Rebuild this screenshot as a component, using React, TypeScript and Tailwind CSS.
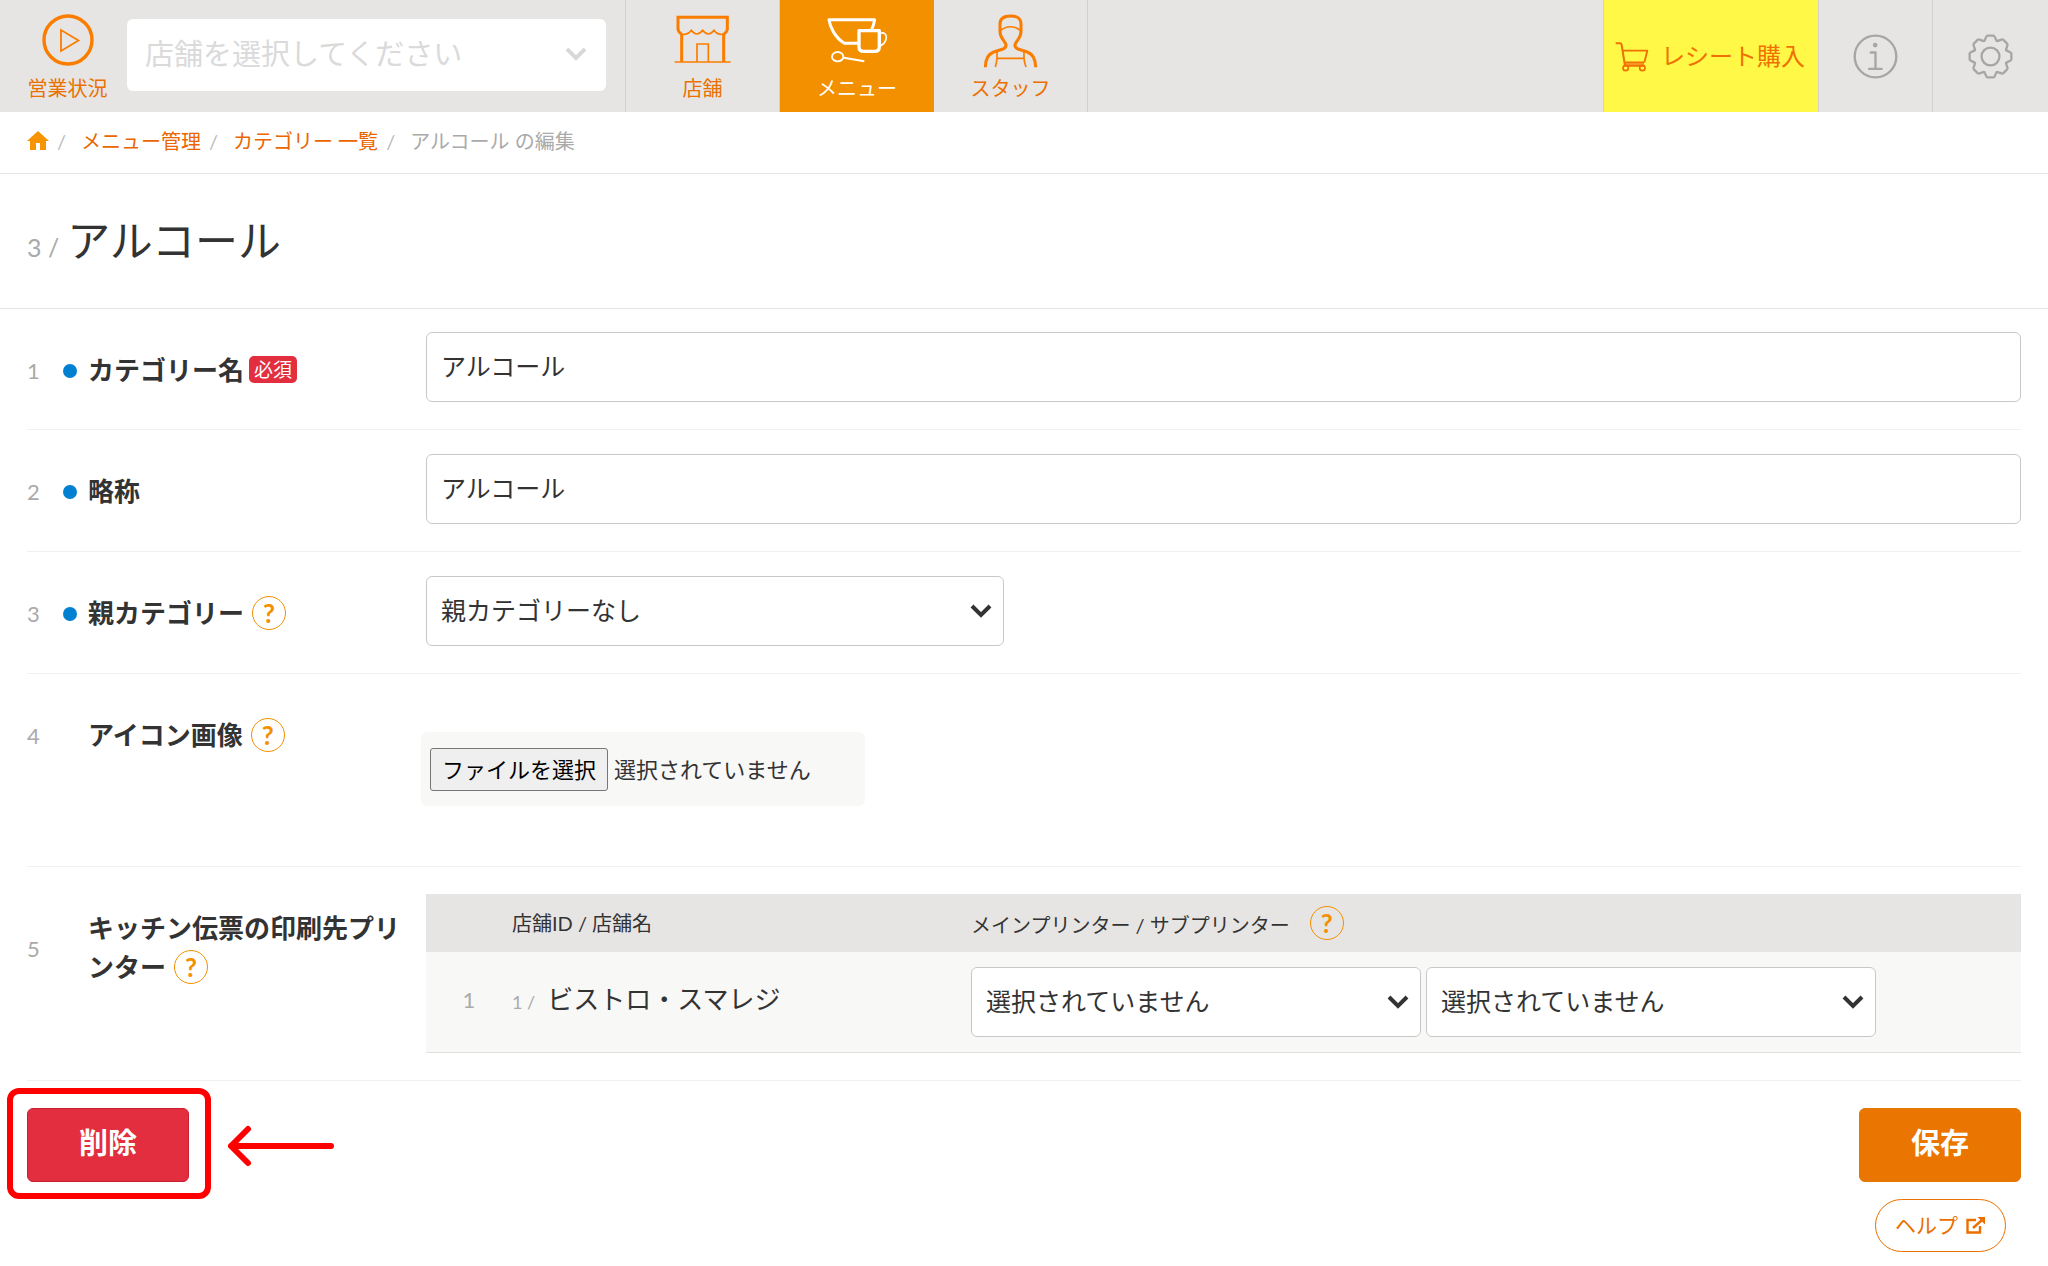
import type { ReactNode } from "react";

function Chevron({ className }: { className: string }) {
  return (
    <svg viewBox="0 0 22 14" fill="none" stroke="currentColor" strokeWidth="4" className={className} aria-hidden="true">
      <path d="M2 2 L11 11 L20 2" />
    </svg>
  );
}

function PlayIcon() {
  return (
    <svg viewBox="0 0 52 52" fill="none" stroke="#fb7d00" className="h-[52px] w-[52px]" aria-hidden="true">
      <circle cx="26" cy="26" r="24" strokeWidth="3.4" />
      <path d="M19 16 V37 L36.5 26.5 Z" strokeWidth="1.8" />
    </svg>
  );
}

function ShopIcon() {
  return (
    <svg viewBox="216 42 183 162" fill="none" stroke="#fb7d00" className="h-[54px] w-[61px]" aria-hidden="true">
      <path d="M234 90 V52 H382 V90" strokeWidth="9" />
      <path d="M234 88 Q236 100 245 101" strokeWidth="8" />
      <path d="M382 88 Q380 100 371 101" strokeWidth="8" />
      <path d="M240 102 Q262 108 274 91 Q282 102 290 102 Q300 102 308 91 Q316 102 325 102 Q334 102 342 91 Q354 108 376 102" strokeWidth="5" />
      <path d="M245 100 V186 M371 100 V186" strokeWidth="9" />
      <path d="M224 186 H392" strokeWidth="5" />
      <path d="M291 186 V132 H325 V186" strokeWidth="5" />
    </svg>
  );
}

function MenuIcon() {
  return (
    <svg viewBox="681 42 183 162" fill="none" stroke="#ffffff" strokeLinejoin="round" className="h-[54px] w-[61px]" aria-hidden="true">
      <path d="M776 130 H733 C705 112 690 82 687 59 H824 C822 70 819 80 815 89" strokeWidth="9" />
      <path d="M777 92 H838 V140 Q838 154 824 154 H791 Q777 154 777 140 Z" strokeWidth="10" />
      <path d="M842 100 C852 96 859 102 859 112 C858 124 850 133 842 137" strokeWidth="5" />
      <ellipse cx="713" cy="170" rx="17" ry="14" strokeWidth="5.5" />
      <path d="M731 173 L793 184" strokeWidth="6" />
    </svg>
  );
}

function StaffIcon() {
  return (
    <svg viewBox="1137 42 183 162" fill="none" stroke="#fb7d00" className="h-[54px] w-[61px]" aria-hidden="true">
      <path d="M1153 202 C1153 176 1162 162 1178 156 L1206 147 Q1218 142 1214 131 C1207 118 1197 112 1197 95 V72 C1197 56 1206 48 1229 48 C1252 48 1260 56 1260 72 V95 C1260 112 1250 118 1243 131 Q1239 142 1251 147 L1279 156 C1295 162 1304 176 1304 202" strokeWidth="9" />
      <path d="M1198 93 C1214 76 1243 76 1259 93" strokeWidth="5" />
      <path d="M1188 154 V174 Q1188 184 1183 201 M1269 154 V174 Q1269 184 1275 201 M1188 175 H1269" strokeWidth="5" />
    </svg>
  );
}

function CartIcon() {
  return (
    <svg viewBox="103 120 102 93" fill="none" stroke="#f07000" className="h-[31px] w-[34px]" aria-hidden="true">
      <path d="M134 184 H190 V192 H134 Z" fill="#f8a035" stroke="none" />
      <path d="M105 127 H118 Q122 127 123 132 L133 194 H192" strokeWidth="6" />
      <path d="M126 149 H200 L192 181 Q191 184 187 184 H132" strokeWidth="5.5" strokeLinejoin="round" />
      <circle cx="135" cy="201" r="8" strokeWidth="5" />
      <circle cx="185" cy="201" r="8" strokeWidth="5" />
    </svg>
  );
}

function InfoIcon() {
  return (
    <svg viewBox="820 102 134 134" fill="none" stroke="#a6a6a6" strokeLinecap="round" className="h-[45px] w-[45px]" aria-hidden="true">
      <circle cx="887" cy="169" r="62" strokeWidth="7" />
      <circle cx="886" cy="135" r="7" fill="#a6a6a6" stroke="none" />
      <path d="M873 157 H887 V206 M868 206 H905" strokeWidth="7" strokeLinejoin="round" />
    </svg>
  );
}

function GearIcon() {
  const tooth = "M-20 -47 C-14 -50 -15 -62 -9 -63 H9 C15 -62 14 -50 20 -47";
  return (
    <svg viewBox="-68 -68 136 136" fill="none" stroke="#a6a6a6" strokeWidth="7" strokeLinecap="round" strokeLinejoin="round" className="h-[45px] w-[45px]" aria-hidden="true">
      <circle r="27" />
      {[0, 45, 90, 135, 180, 225, 270, 315].map((angle) => (
        <path key={angle} d={tooth} transform={`rotate(${angle})`} />
      ))}
    </svg>
  );
}

function HomeIcon() {
  return (
    <svg viewBox="0 0 22 19" fill="#f79400" className="h-[19px] w-[22px]" aria-hidden="true">
      <path d="M11 0 L22 10 H19 V19 H13 V12 H9 V19 H3 V10 H0 Z" />
    </svg>
  );
}

function ExternalIcon() {
  return (
    <svg viewBox="0 0 19 17" fill="none" stroke="#ea6f00" strokeWidth="2.4" className="h-[17px] w-[19px]" aria-hidden="true">
      <path d="M10 3 H1.5 V15.5 H14 V9" />
      <path d="M7 11 L15.5 3.5" />
      <path d="M11.5 0 H19 V7.5 Z" fill="#ea6f00" stroke="none" />
    </svg>
  );
}

function HelpMark({ className = "" }: { className?: string }) {
  return (
    <button
      type="button"
      aria-label="ヘルプを表示"
      className={`inline-flex h-[34px] w-[34px] items-center justify-center rounded-full border border-[#f39000] align-baseline font-[Lato] text-[26px] leading-none font-bold text-[#f39000] ${className}`}
    >
      ?
    </button>
  );
}

function NavTab({ icon, label, active = false }: { icon: ReactNode; label: string; active?: boolean }) {
  return (
    <a
      href="#"
      className={
        active
          ? "flex w-[154px] flex-col items-center gap-2 bg-[#f39000] pt-3.5 text-white"
          : "flex w-[154px] flex-col items-center gap-2 border-r border-[#d2d1cf] pt-3.5 text-[#ea7000]"
      }
    >
      {icon}
      <span className="text-xl leading-6">{label}</span>
    </a>
  );
}

function SelectBox({ id, label, text, className }: { id: string; label?: string; text: string; className: string }) {
  return (
    <div className={`relative ${className}`}>
      <select
        id={id}
        aria-label={label}
        className="h-[70px] w-full appearance-none rounded-md border border-[#c8c8c8] bg-white px-3.5 text-[25px] text-[#333]"
      >
        <option>{text}</option>
      </select>
      <Chevron className="pointer-events-none absolute top-7 right-3 h-3.5 w-[22px] text-[#333]" />
    </div>
  );
}

type RowProps = {
  no: number;
  label: string;
  htmlFor?: string;
  dot?: boolean;
  after?: ReactNode;
  bodyClass: string;
  children: ReactNode;
};

function Row({ no, label, htmlFor, dot = false, after, bodyClass, children }: RowProps) {
  return (
    <div className="flex items-start border-b border-[#f0f0f0]">
      <div className="flex w-[399px] shrink-0 items-center pt-[42px]">
        <span className="w-9 shrink-0 text-[22px] leading-[39px] text-[#aaa]">{no}</span>
        <span className="flex w-[25px] shrink-0">{dot && <span className="h-3.5 w-3.5 rounded-full bg-[#0080d0]" />}</span>
        <span className="w-[314px] text-[26px] leading-[39px] font-bold text-[#333]">
          <label htmlFor={htmlFor}>{label}</label>
          {after}
        </span>
      </div>
      <div className={`min-w-0 flex-1 ${bodyClass}`}>{children}</div>
    </div>
  );
}

const inputClass = "block h-[70px] w-full rounded-md border border-[#c8c8c8] bg-white px-3.5 pb-1 text-[25px] text-[#333]";

export default function App() {
  return (
    <div className="min-h-screen bg-white font-[Lato,'Noto_Sans_CJK_JP',sans-serif] text-[#333]">
      <header className="flex h-28 bg-[#e6e5e3]">
        <a href="#" className="flex w-[127px] flex-col items-center gap-2.5 pt-3.5 pl-2 text-[#ea7000]">
          <PlayIcon />
          <span className="text-xl leading-6">営業状況</span>
        </a>
        <div className="border-r border-[#d2d1cf] pt-[19px] pr-[19px]">
          <div className="relative w-[479px]">
            <select
              aria-label="店舗"
              className="h-[72px] w-full appearance-none rounded-md bg-white px-[18px] pb-0.5 text-[29px] text-[#dadada]"
            >
              <option>店舗を選択してください</option>
            </select>
            <Chevron className="pointer-events-none absolute top-7 right-[19px] h-3.5 w-[22px] text-[#d8d8d8]" />
          </div>
        </div>
        <nav className="flex">
          <NavTab icon={<ShopIcon />} label="店舗" />
          <NavTab icon={<MenuIcon />} label="メニュー" active />
          <NavTab icon={<StaffIcon />} label="スタッフ" />
        </nav>
        <div className="ml-auto flex">
          <a href="#" className="flex w-[216px] items-center gap-3 border-x border-[#d2d1cf] bg-[#fff846] pl-[11px] text-[24px] text-[#f07000]">
            <CartIcon />
            <span className="whitespace-nowrap">レシート購入</span>
          </a>
          <button type="button" aria-label="お知らせ" className="flex w-[114px] items-center justify-center border-r border-[#d2d1cf]">
            <InfoIcon />
          </button>
          <button type="button" aria-label="設定" className="flex w-[115px] items-center justify-center">
            <GearIcon />
          </button>
        </div>
      </header>

      <nav className="flex h-[62px] items-center border-b border-[#e4e4e4] px-[27px] pb-1 text-xl text-[#aaa]">
        <a href="#" aria-label="ホーム">
          <HomeIcon />
        </a>
        <span className="w-8 pl-2 text-[#bbb]">/</span>
        <a href="#" className="text-[#ea6600]">メニュー管理</a>
        <span className="w-8 pl-2 text-[#bbb]">/</span>
        <a href="#" className="text-[#ea6600]">カテゴリー 一覧</a>
        <span className="w-8 pl-2 text-[#bbb]">/</span>
        <span>アルコール の編集</span>
      </nav>

      <div className="flex h-[135px] items-center border-b border-[#e4e4e4] px-[27px]">
        <h1 className="flex items-baseline gap-2">
          <span className="text-[25px] text-[#aaa]">3 /</span>
          <span className="text-[43px]">アルコール</span>
        </h1>
      </div>

      <main className="px-[27px]">
        <Row
          no={1}
          label="カテゴリー名"
          htmlFor="name"
          dot
          bodyClass="pt-[23px] pb-[27px]"
          after={
            <span className="ml-[5px] inline-flex h-[27px] items-center rounded-[5px] bg-[#e22e3e] px-[5px] align-[3px] text-[19px] leading-none font-normal text-white">
              必須
            </span>
          }
        >
          <input id="name" type="text" defaultValue="アルコール" className={inputClass} />
        </Row>

        <Row no={2} label="略称" htmlFor="short" dot bodyClass="pt-6 pb-[27px]">
          <input id="short" type="text" defaultValue="アルコール" className={inputClass} />
        </Row>

        <Row no={3} label="親カテゴリー" htmlFor="parent" dot bodyClass="pt-6 pb-[27px]" after={<HelpMark className="ml-2" />}>
          <SelectBox id="parent" text="親カテゴリーなし" className="w-[578px]" />
        </Row>

        <Row no={4} label="アイコン画像" htmlFor="icon" bodyClass="pt-[58px] pb-[60px]" after={<HelpMark className="ml-2" />}>
          <div className="-ml-[5px] flex h-[74px] w-[444px] items-center gap-1.5 rounded-md bg-[#f8f8f7] px-[9px] text-[22px]">
            <input id="icon" type="file" className="sr-only" />
            <label htmlFor="icon" className="flex h-[43px] w-[178px] items-center justify-center rounded-[3px] border border-[#767676] bg-[#efefef] whitespace-nowrap text-black">
              ファイルを選択
            </label>
            <span>選択されていません</span>
          </div>
        </Row>

        <Row no={5} label="キッチン伝票の印刷先プリンター" bodyClass="py-[27px]" after={<HelpMark className="ml-2" />}>
          <table className="w-full table-fixed text-left">
            <colgroup>
              <col className="w-[86px]" />
              <col className="w-[459px]" />
              <col />
            </colgroup>
            <thead>
              <tr className="h-[58px] bg-[#e6e5e3] text-xl">
                <th aria-label="番号" />
                <th className="font-normal">店舗ID / 店舗名</th>
                <th className="font-normal">
                  メインプリンター / サブプリンター
                  <HelpMark className="ml-5" />
                </th>
              </tr>
            </thead>
            <tbody>
              <tr className="h-[100px] border-b border-[#e0e0e0] bg-[#f8f8f7]">
                <td className="pb-1 text-center text-[22px] text-[#aaa]">1</td>
                <td className="pb-1">
                  <span className="mr-3 text-lg text-[#aaa]">1 /</span>
                  <span className="text-[26px]">ビストロ・スマレジ</span>
                </td>
                <td>
                  <div className="flex gap-[5px]">
                    <SelectBox id="main-printer" label="メインプリンター" text="選択されていません" className="w-[450px]" />
                    <SelectBox id="sub-printer" label="サブプリンター" text="選択されていません" className="w-[450px]" />
                  </div>
                </td>
              </tr>
            </tbody>
          </table>
        </Row>

        <div className="flex items-start justify-between pt-[27px]">
          <div className="relative">
            <button type="button" className="h-[74px] w-[162px] rounded-md border border-[#c8202f] bg-[#e22e3e] pb-1 text-[29px] font-bold text-white">
              削除
            </button>
            <div className="pointer-events-none absolute -top-5 -right-[22px] -bottom-[17px] -left-5 rounded-xl border-6 border-[#ff0000]" />
            <svg
              viewBox="0 0 108 42"
              fill="none"
              stroke="#ff0000"
              strokeWidth="6"
              strokeLinecap="round"
              strokeLinejoin="round"
              className="pointer-events-none absolute top-[17px] left-[200px] h-[42px] w-[108px]"
              aria-hidden="true"
            >
              <path d="M104 21 H4 M21 4 L4 21 L21 38" />
            </svg>
          </div>
          <div className="flex flex-col items-center gap-[17px]">
            <button type="button" className="h-[74px] w-[162px] rounded-md border border-[#e07a00] bg-[#ea7500] pb-1 text-[29px] font-bold text-white">
              保存
            </button>
            <a href="#" className="flex h-[53px] w-[131px] items-center justify-center gap-2 rounded-full border border-[#ea6f00] text-[21px] text-[#ea6f00]">
              ヘルプ
              <ExternalIcon />
            </a>
          </div>
        </div>
      </main>
    </div>
  );
}
